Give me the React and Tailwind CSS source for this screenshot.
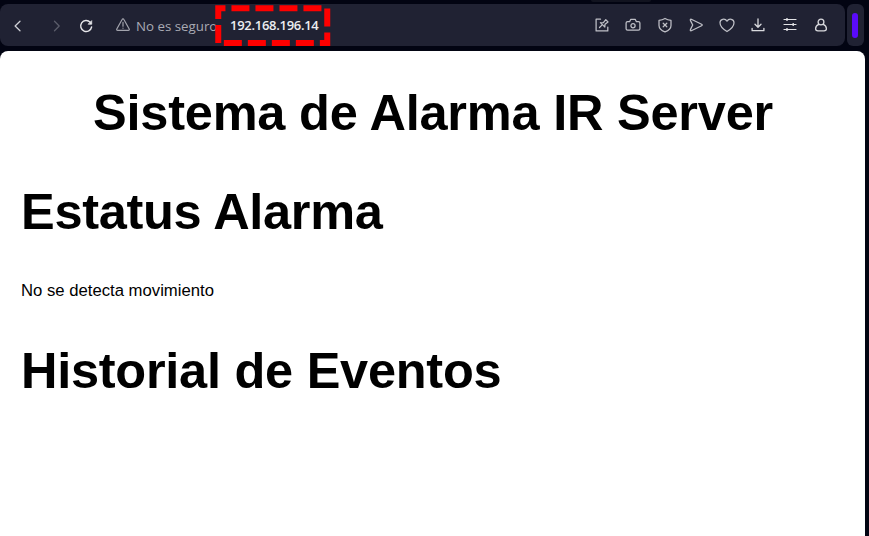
const strokeProps = {
  fill: 'none',
  strokeLinecap: 'round',
  strokeLinejoin: 'round',
};

function Icon({ children, className = 'text-[#bfc0c7]', width = 1.25, label }) {
  return (
    <svg
      viewBox="0 0 18 18"
      role="img"
      aria-label={label}
      className={`size-[18px] shrink-0 ${className}`}
      stroke="currentColor"
      strokeWidth={width}
      {...strokeProps}
    >
      {children}
    </svg>
  );
}

function Navigation() {
  return (
    <div className="flex items-center pt-px">
      <Icon label="Atrás" className="text-[#d0d1d7]">
        <path d="M11 4.2 6.1 9l4.9 4.8" />
      </Icon>
      <Icon label="Adelante" className="ml-[20px] text-[#5b5d6b]">
        <path d="M7.5 4.2l4.7 4.8-4.7 4.8" />
      </Icon>
      <Icon label="Recargar" className="ml-[12px] text-[#e6e6ea]" width={1.4}>
        <path d="M13.2 5.2A5.5 5.5 0 1 0 14.6 10" />
        <path d="M14.7 4v3.2h-3.2z" fill="currentColor" strokeWidth="0.8" />
      </Icon>
    </div>
  );
}

function Address() {
  return (
    <div className="ml-[19px] flex items-center font-['Open_Sans',sans-serif] text-[13.3px] leading-5">
      <Icon label="Advertencia" className="text-[#a3a4ad]" width={1.2}>
        <path d="M8.1 3.5 2.8 13c-.4.8 0 1.4.8 1.4h10.8c.8 0 1.2-.6.8-1.4L9.9 3.5c-.4-.8-1.4-.8-1.8 0Z" />
        <path d="M9 6.4v3.8M9 12v.2" />
      </Icon>
      <span className="ml-[4px] w-[94px] whitespace-nowrap pt-px text-[#a9aab3]">No es seguro</span>
      <span className="whitespace-nowrap text-[13px] font-semibold tracking-[-0.28px] text-[#ececf0]">192.168.196.14</span>
    </div>
  );
}

function Actions() {
  return (
    <div className="ml-auto mr-[15px] flex items-center gap-[13.3px]">
      <Icon label="Editar">
        <path d="M7.5 3.2H3.1v11.7h11.7V11" />
        <path d="M6.5 11.5l2.4-2.4M7.4 6.6l4 4M7.7 6.9l2.7-.2 2.4-3 2.2 2.2-3 2.4-.2 2.7" />
      </Icon>
      <Icon label="Captura">
        <path d="M3.6 5.7h2l1.2-2.4h4.4l1.2 2.4h2c.9 0 1.5.6 1.5 1.4v5.7c0 .8-.6 1.4-1.5 1.4H3.6c-.9 0-1.5-.6-1.5-1.4V7.1c0-.8.6-1.4 1.5-1.4Z" />
        <circle cx="9" cy="9.8" r="2.1" />
      </Icon>
      <Icon label="Protección">
        <path d="M9 2.5c1.8 1.1 3.8 1.7 6 1.9v5c0 3.2-2.6 5.1-6 6.5-3.4-1.4-6-3.3-6-6.5v-5c2.2-.2 4.2-.8 6-1.9Z" />
        <path d="m7.2 7.2 3.6 3.6m0-3.6-3.6 3.6" />
      </Icon>
      <Icon label="Enviar">
        <path d="M3.4 4.4 5.7 9l-2.3 4.6c-.3.9.1 1.4.9 1.1l10.3-5c.8-.4.8-1 0-1.4L4.3 3.3c-.8-.3-1.2.2-.9 1.1Z" />
      </Icon>
      <Icon label="Favoritos">
        <path d="M9 15.5S2 11.2 2 6.7C2 3 6.9 1.8 9 5.2c2.1-3.4 7-2.2 7 1.5 0 4.5-7 8.8-7 8.8Z" />
      </Icon>
      <Icon label="Descargas" className="text-[#d9dade]" width={1.3}>
        <path d="M9 3v8M6 8.3l3 3 3-3M3.1 12.3v2.4h11.8v-2.4" />
      </Icon>
      <Icon label="Ajustes" className="text-[#e3e4e7]" width={1.2}>
        <path d="M3 3.5h12M3 8.5h12M3 13.5h12" />
        <path d="M6 3v1M12.2 8v1M6 13v1" strokeWidth="1.8" />
      </Icon>
      <Icon label="Perfil" className="text-[#d9dade]" width={1.3}>
        <circle cx="9" cy="6" r="2.9" />
        <path d="M6.8 8.3C4.8 9 3.6 10.8 3.6 12.7c0 1.6 1 2.1 2.3 2.1h6.2c1.3 0 2.3-.5 2.3-2.1 0-1.9-1.2-3.7-3.2-4.4" />
      </Icon>
    </div>
  );
}

function Highlight() {
  return (
    <svg
      className="pointer-events-none absolute left-[215px] top-[5px] h-[41px] w-[116px]"
      viewBox="215 5 116 41"
      fill="none"
      aria-hidden="true"
    >
      <path d="M218.25 43V8.2H327.25V43Z" stroke="#ff0000" strokeWidth="6" strokeDasharray="18 6" />
    </svg>
  );
}

export default function App() {
  return (
    <div className="relative flex h-[536px] w-[869px] flex-col overflow-hidden bg-[#020412]">
      <div className="flex h-1 justify-end pr-[218px]">
        <div className="h-[2px] w-[60px] rounded-b bg-[#11131f]" />
      </div>
      <header className="flex h-[42px] gap-[2px]">
        <div className="flex w-[845px] items-center rounded-lg bg-[#202233] pl-[9px]">
          <Navigation />
          <Address />
          <Actions />
        </div>
        <div className="flex w-[17px] items-center rounded-md bg-[#202233] pl-[5px]">
          <div className="h-[25px] w-[6px] rounded-full bg-[#5a0bfa]" />
        </div>
      </header>
      <main className="mt-[5px] w-[865px] flex-1 rounded-t-lg bg-white pl-[21px] pr-[20px] font-['Liberation_Sans',Arial,sans-serif] text-black">
        <h1 className="pt-[33px] text-center text-[50.5px] font-bold leading-[58px] tracking-[-0.22px]">Sistema de Alarma IR Server</h1>
        <h1 className="mt-[41px] text-[50.5px] font-bold leading-[58px] tracking-[-0.3px]">Estatus Alarma</h1>
        <p className="mt-[41px] text-[16.7px] leading-[18px]">No se detecta movimiento</p>
        <h1 className="mt-[42px] text-[50.5px] font-bold leading-[58px] tracking-[-0.26px]">Historial de Eventos</h1>
      </main>
      <Highlight />
    </div>
  );
}
